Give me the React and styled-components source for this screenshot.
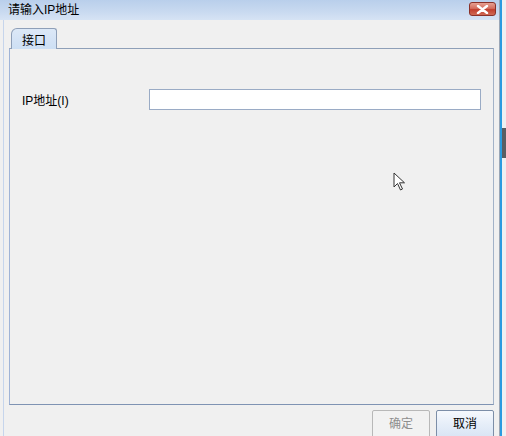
import React from 'react';
import styled, { createGlobalStyle } from 'styled-components';

const GlobalStyle = createGlobalStyle`
  html, body {
    margin: 0;
    padding: 0;
    background: #f0f0f0;
  }
  body {
    font-family: "Liberation Sans", "Noto Sans CJK SC", sans-serif;
    font-size: 12px;
    color: #000;
  }
`;

const App = () => {
  return (
    <>
      <GlobalStyle />
      <Screen>
        <Window>
          <TitleBar>
            <Title>请输入IP地址</Title>
            <CloseButton>
              <svg width="13" height="9" viewBox="0 0 13 9">
                <path d="M2 1 L11 8 M11 1 L2 8" stroke="#fff" strokeWidth="2.4" strokeLinecap="round" />
              </svg>
            </CloseButton>
          </TitleBar>
          <Frame>
            <TabStrip>
              <Tab>接口</Tab>
            </TabStrip>
            <TabPanel>
              <FieldRow>
                <Label>IP地址(I)</Label>
                <Input type="text" />
              </FieldRow>
              <Pointer>
                <svg width="14" height="20" viewBox="0 0 14 20">
                  <path d="M1 1 L1 15 L4.5 11.5 L7.5 18 L9.5 17 L6.5 10.8 L11.5 10.8 Z" fill="#fff" stroke="#333" strokeWidth="1" strokeLinejoin="round" />
                </svg>
              </Pointer>
            </TabPanel>
            <ButtonBar>
              <Button disabled>确定</Button>
              <Button>取消</Button>
            </ButtonBar>
          </Frame>
        </Window>
        <BackEdge>
          <DarkBlock />
        </BackEdge>
      </Screen>
    </>
  );
};

const Screen = styled.div`
  width: 506px;
  height: 436px;
  display: flex;
  overflow: hidden;
`;

const Window = styled.div`
  width: 500px;
  height: 436px;
  display: flex;
  flex-direction: column;
  background: #f0f0f0;
  border-right: 1px solid #9aa6b6;
  box-sizing: border-box;
`;

const TitleBar = styled.div`
  height: 20px;
  flex: none;
  display: flex;
  align-items: center;
  justify-content: space-between;
  padding: 0 3px 0 8px;
  background: linear-gradient(to bottom, #b9cfeb 0%, #c9daf0 60%, #d6e3f4 100%);
`;

const Title = styled.span`
  font-size: 12px;
  line-height: 14px;
  margin-top: -1px;
`;

const CloseButton = styled.div`
  width: 27px;
  height: 14px;
  margin-top: -2px;
  display: flex;
  align-items: center;
  justify-content: center;
  border: 1px solid #8a3128;
  border-radius: 3px;
  background: linear-gradient(to bottom, #e6a092 0%, #d46e5e 45%, #c23f2e 55%, #d06a55 100%);
  box-sizing: border-box;
`;

const Frame = styled.div`
  flex: 1;
  display: flex;
  flex-direction: column;
  margin-left: 3px;
  border-left: 1px solid #c6d5ec;
  padding: 8px 5px 0 5px;
`;

const TabStrip = styled.div`
  display: flex;
  padding-left: 2px;
  height: 21px;
  margin-bottom: -1px;
  position: relative;
  z-index: 1;
`;

const Tab = styled.div`
  width: 46px;
  height: 21px;
  box-sizing: border-box;
  display: flex;
  align-items: center;
  justify-content: center;
  padding-top: 1px;
  font-size: 12px;
  background: linear-gradient(to bottom, #dce8f7, #cddff4);
  border: 1px solid #8e9fb8;
  border-bottom: none;
  border-radius: 6px 3px 0 0;
`;

const TabPanel = styled.div`
  height: 357px;
  box-sizing: border-box;
  position: relative;
  border: 1px solid #a2b2c8;
  border-top-color: #8e9fb8;
  border-bottom-color: #7f93b3;
  border-left-color: #9fb3d6;
  padding-top: 40px;
`;

const FieldRow = styled.div`
  display: flex;
  align-items: center;
  padding-left: 12px;
  padding-right: 12px;
`;

const Label = styled.span`
  width: 127px;
  font-size: 12px;
`;

const Input = styled.input`
  flex: 1;
  height: 21px;
  box-sizing: border-box;
  border: 1px solid #9aabc5;
  background: #fff;
  margin: 0;
  outline: none;
`;

const Pointer = styled.div`
  position: absolute;
  left: 383px;
  top: 123px;
  line-height: 0;
`;

const ButtonBar = styled.div`
  display: flex;
  justify-content: flex-end;
  gap: 6px;
  padding-top: 5px;
  padding-right: 0;
`;

const Button = styled.button`
  width: 58px;
  height: 28px;
  box-sizing: border-box;
  font-family: "Liberation Sans", "Noto Sans CJK SC", sans-serif;
  font-size: 12px;
  padding: 0 0 4px 0;
  border-radius: 2px;
  border: 1px solid ${p => (p.disabled ? '#b8b8b8' : '#7c8ea8')};
  color: ${p => (p.disabled ? '#8e8e8e' : '#000')};
  background: ${p =>
    p.disabled
      ? '#f2f2f2'
      : 'linear-gradient(to bottom, #f6f9fd 0%, #e6eef9 50%, #d9e5f4 100%)'};
`;

const BackEdge = styled.div`
  flex: 1;
  border-left: 2px solid #2a9be0;
  background: #eef0f2;
  display: flex;
  flex-direction: column;
  padding-top: 128px;
`;

const DarkBlock = styled.div`
  height: 30px;
  background: #5a5e63;
`;

export default App;
